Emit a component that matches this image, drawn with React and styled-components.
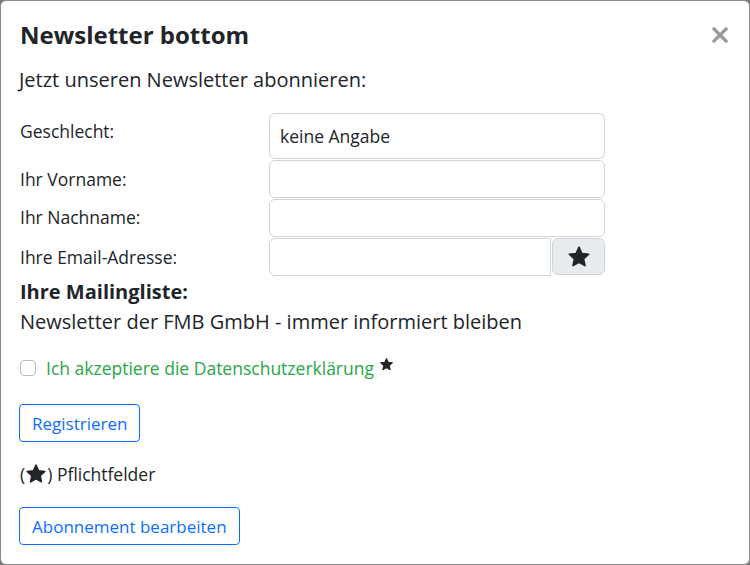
import React from "react";
import styled, {createGlobalStyle} from "styled-components";

const GlobalStyle = createGlobalStyle`
  html, body {
    margin: 0;
    padding: 0;
    background: #7a7a7a;
  }
  * {
    box-sizing: border-box;
  }
`;

const Modal = styled.div`
  width: 750px;
  height: 565px;
  background: #fff;
  border: 1px solid #8a8a8a;
  border-radius: 6px;
  font-family: "Open Sans", "Liberation Sans", sans-serif;
  color: #212529;
  overflow: hidden;
`;

const Header = styled.div`
  display: flex;
  justify-content: space-between;
  align-items: center;
  padding: 19px 20px 0 19px;
`;

const Title = styled.h1`
  margin: 0;
  font-size: 24px;
  font-weight: 700;
  line-height: 30px;
`;

const Close = styled.button`
  border: 0;
  background: none;
  padding: 0;
  width: 18px;
  height: 18px;
  display: flex;
  align-items: center;
  justify-content: center;
  cursor: pointer;
`;

const Body = styled.div`
  padding: 15px 18px 0;
`;

const Intro = styled.p`
  margin: 0 0 18px;
  font-size: 20px;
  line-height: 30px;
`;

const FormGrid = styled.div`
  display: grid;
  grid-template-columns: 250px 336px;
  row-gap: 1px;
`;

const Label = styled.label`
  font-size: 17.5px;
  line-height: 24px;
  padding: ${p => p.$top || 6}px 0 0 1px;
`;

const Input = styled.input`
  width: 100%;
  height: ${p => p.$tall ? 46 : 38}px;
  border: 1px solid #ced4da;
  border-radius: ${p => p.$group ? "6px 0 0 6px" : "6px"};
  padding: 6px 10px;
  font-family: inherit;
  font-size: 17.5px;
  color: #212529;
  background: #fff;
  outline: none;
`;

const InputGroup = styled.div`
  display: flex;
  height: 38px;
`;

const AddOn = styled.span`
  flex: 0 0 53px;
  height: 37px;
  display: flex;
  align-items: center;
  justify-content: center;
  background: #e9ecef;
  border: 1px solid #ced4da;
  border-radius: 6px;
  margin-left: 1px;
`;

const Block = styled.div`
  padding-left: 1px;
`;

const ListTitle = styled(Block)`
  margin-top: 2px;
  font-size: 20px;
  font-weight: 700;
  line-height: 28px;
`;

const ListName = styled(Block)`
  margin-top: 1px;
  font-size: 20px;
  line-height: 30px;
`;

const CheckRow = styled(Block)`
  display: flex;
  align-items: center;
  margin-top: 19px;
`;

const Checkbox = styled.span`
  flex: 0 0 16px;
  width: 16px;
  height: 16px;
  border: 1px solid #b8bcc0;
  border-radius: 4px;
  margin: 0 10px 0 0;
`;

const CheckLabel = styled.span`
  font-size: 17.5px;
  line-height: 24px;
  color: #28a745;
`;

const Sup = styled.span`
  display: inline-flex;
  margin-left: 5px;
  position: relative;
  top: -4px;
`;

const OutlineButton = styled.button`
  display: block;
  height: 38px;
  padding: 0 12px;
  border: 1px solid #0d6efd;
  border-radius: 4px;
  background: #fff;
  color: #0d6efd;
  font-family: inherit;
  font-size: 17px;
  margin-top: ${p => p.$mt}px;
  margin-left: 0;
  cursor: pointer;
`;

const Note = styled(Block)`
  display: flex;
  align-items: center;
  margin-top: 20px;
  font-size: 17.5px;
  line-height: 24px;
`;

const Star = ({size = 18, color = "#212529"}) => (
  <svg width={size} height={size} viewBox="0 0 24 24">
    <path
      fill={color}
      stroke={color}
      strokeWidth="1.6"
      strokeLinejoin="round"
      d="M12 2.2l2.9 6.3 6.8.7-5.1 4.6 1.4 6.8L12 17.2l-6 3.4 1.4-6.8-5.1-4.6 6.8-.7z"
    />
  </svg>
);

const CloseIcon = () => (
  <svg width="16" height="16" viewBox="0 0 16 16">
    <path d="M2 2l12 12M14 2L2 14" stroke="#9a9a9a" strokeWidth="3.2" strokeLinecap="square" />
  </svg>
);

const App = () => (
  <>
    <GlobalStyle/>
    <Modal>
      <Header>
        <Title>Newsletter bottom</Title>
        <Close aria-label="Schließen"><CloseIcon/></Close>
      </Header>
      <Body>
        <Intro>Jetzt unseren Newsletter abonnieren:</Intro>
        <FormGrid>
          <Label $top={6}>Geschlecht:</Label>
          <Input $tall defaultValue="keine Angabe"/>
          <Label $top={7}>Ihr Vorname:</Label>
          <Input/>
          <Label>Ihr Nachname:</Label>
          <Input/>
          <Label $top={7}>Ihre Email-Adresse:</Label>
          <InputGroup>
            <Input $group/>
            <AddOn><Star size={24}/></AddOn>
          </InputGroup>
        </FormGrid>
        <ListTitle>Ihre Mailingliste:</ListTitle>
        <ListName>Newsletter der FMB GmbH - immer informiert bleiben</ListName>
        <CheckRow>
          <Checkbox/>
          <CheckLabel>Ich akzeptiere die Datenschutzerklärung</CheckLabel>
          <Sup><Star size={15}/></Sup>
        </CheckRow>
        <OutlineButton $mt={24}>Registrieren</OutlineButton>
        <Note>(<Star size={22}/>) Pflichtfelder</Note>
        <OutlineButton $mt={21}>Abonnement bearbeiten</OutlineButton>
      </Body>
    </Modal>
  </>
);

export default App;
